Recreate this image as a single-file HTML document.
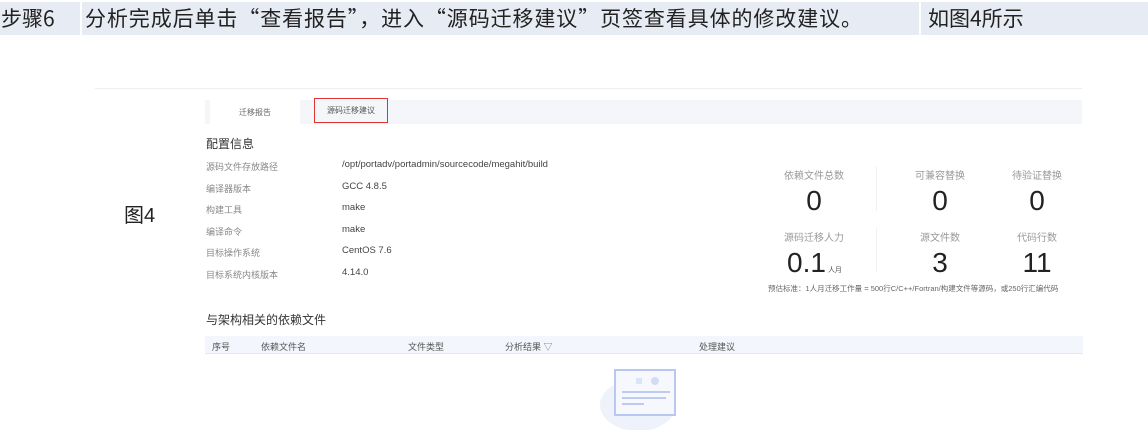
<!DOCTYPE html>
<html><head><meta charset="utf-8"><style>
*{margin:0;padding:0;box-sizing:border-box}
body{width:1148px;height:430px;background:#fff;position:relative;overflow:hidden;font-family:"Liberation Sans","Noto Sans CJK SC",sans-serif;color:#333}
.a{position:absolute;white-space:nowrap}
.bar{position:absolute;top:2px;height:33px;background:#e7ebf3;font-size:21px;line-height:33px;color:#222;font-family:"Noto Sans CJK SC","Liberation Sans",sans-serif}
.lab{font-size:9px;color:#888}
.val{font-size:9.5px;color:#444}
.sl{font-size:10px;color:#999;transform:translateX(-50%)}
.sn{font-size:28px;color:#222;transform:translateX(-50%)}
.th{font-size:9px;color:#555;top:340px}
</style></head><body>
<div class="bar" style="left:0;width:80px;padding-left:1px">步骤6</div>
<div class="bar" style="left:82px;width:837px;padding-left:3px;letter-spacing:0.9px">分析完成后单击“查看报告”，进入“源码迁移建议”页签查看具体的修改建议。</div>
<div class="bar" style="left:921px;width:227px;padding-left:7px">如图4所示</div>

<div class="a" style="left:95px;top:88px;width:987px;height:1px;background:#eceef2"></div>
<div class="a" style="left:205px;top:100px;width:877px;height:24px;background:#f4f6fa"></div>
<div class="a" style="left:210px;top:100px;width:90px;height:24px;background:#fff;font-size:8px;color:#666;text-align:center;line-height:26px">迁移报告</div>
<div class="a" style="left:314px;top:98px;width:74px;height:25px;border:1.5px solid #d33;font-size:8px;color:#555;text-align:center;line-height:23px">源码迁移建议</div>

<div class="a" style="left:206px;top:135px;font-size:12px;color:#333">配置信息</div>
<div class="a lab" style="left:206px;top:160px">源码文件存放路径</div><div class="a val" style="left:342px;top:159px">/opt/portadv/portadmin/sourcecode/megahit/build</div>
<div class="a lab" style="left:206px;top:182px">编译器版本</div><div class="a val" style="left:342px;top:181px">GCC 4.8.5</div>
<div class="a lab" style="left:206px;top:203px">构建工具</div><div class="a val" style="left:342px;top:202px">make</div>
<div class="a lab" style="left:206px;top:225px">编译命令</div><div class="a val" style="left:342px;top:224px">make</div>
<div class="a lab" style="left:206px;top:246px">目标操作系统</div><div class="a val" style="left:342px;top:245px">CentOS 7.6</div>
<div class="a lab" style="left:206px;top:268px">目标系统内核版本</div><div class="a val" style="left:342px;top:267px">4.14.0</div>

<div class="a" style="left:124px;top:199px;font-size:20px;color:#222">图4</div>

<div class="a sl" style="left:814px;top:167px">依赖文件总数</div>
<div class="a sl" style="left:940px;top:167px">可兼容替换</div>
<div class="a sl" style="left:1037px;top:167px">待验证替换</div>
<div class="a sn" style="left:814px;top:185px">0</div>
<div class="a sn" style="left:940px;top:185px">0</div>
<div class="a sn" style="left:1037px;top:185px">0</div>
<div class="a sl" style="left:814px;top:229px">源码迁移人力</div>
<div class="a sl" style="left:940px;top:229px">源文件数</div>
<div class="a sl" style="left:1037px;top:229px">代码行数</div>
<div class="a" style="left:787px;top:247px;font-size:28px;color:#222">0.1<span style="font-size:7px;color:#555;margin-left:2px">人月</span></div>
<div class="a sn" style="left:940px;top:247px">3</div>
<div class="a sn" style="left:1037px;top:247px">11</div>
<div class="a" style="left:876px;top:166px;width:1px;height:45px;background:#eef0f3"></div>
<div class="a" style="left:876px;top:228px;width:1px;height:44px;background:#eef0f3"></div>
<div class="a" style="left:768px;top:283px;font-size:7.5px;color:#666">预估标准：1人月迁移工作量 = 500行C/C++/Fortran/构建文件等源码，或250行汇编代码</div>

<div class="a" style="left:206px;top:311px;font-size:12px;color:#333">与架构相关的依赖文件</div>
<div class="a" style="left:205px;top:336px;width:878px;height:18px;background:#f3f6fc;border-bottom:1px solid #e3e7ee"></div>
<div class="a th" style="left:212px">序号</div>
<div class="a th" style="left:261px">依赖文件名</div>
<div class="a th" style="left:408px">文件类型</div>
<div class="a th" style="left:505px">分析结果 <span style="color:#777">▽</span></div>
<div class="a th" style="left:699px">处理建议</div>

<svg class="a" style="left:596px;top:365px" width="84" height="65" viewBox="0 0 84 65">
<ellipse cx="42" cy="40" rx="38" ry="26" fill="#eef2fb"/>
<rect x="19" y="5" width="60" height="45" fill="#f6f8fd" stroke="#b9c8f0" stroke-width="2"/>
<rect x="40" y="13" width="6" height="6" fill="#dbe3f7"/><circle cx="59" cy="16" r="4" fill="#d2dcf5"/>
<rect x="26" y="26" width="48" height="2" fill="#bccbf0"/><rect x="26" y="32" width="44" height="2" fill="#bccbf0"/><rect x="26" y="38" width="22" height="2" fill="#bccbf0"/>
</svg>
</body></html>
